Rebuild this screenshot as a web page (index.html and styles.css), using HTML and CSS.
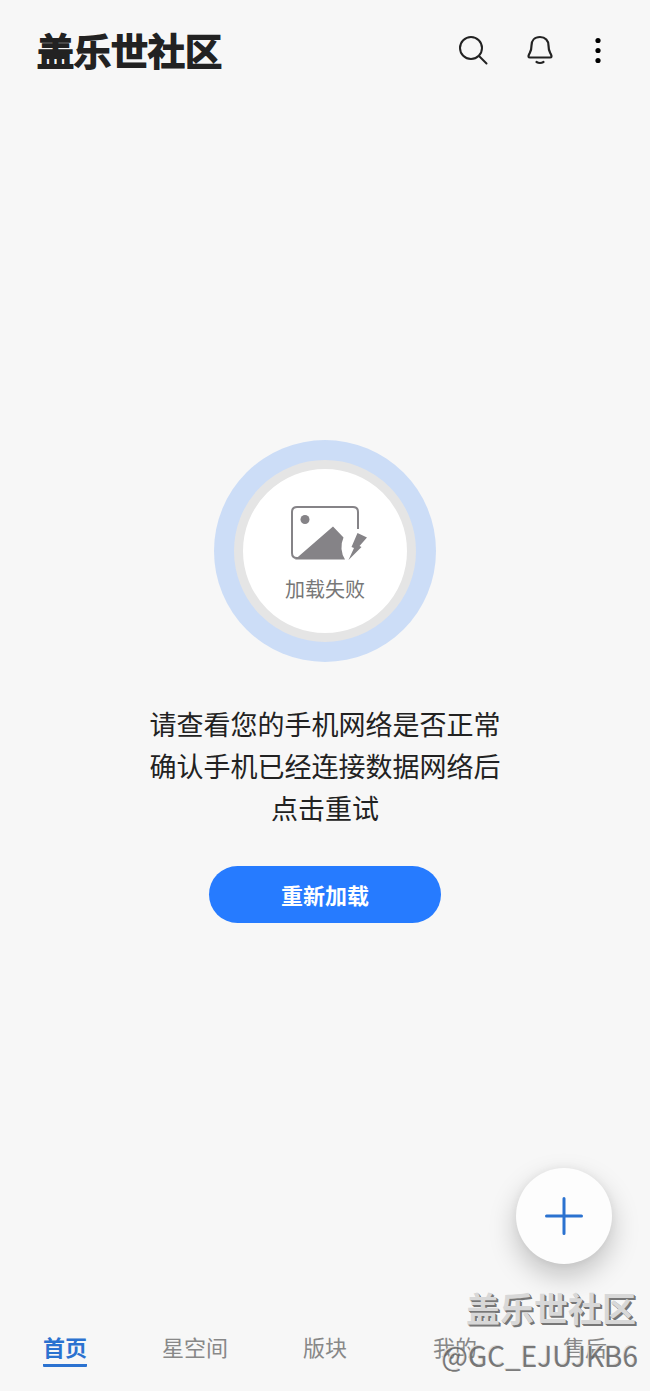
FILE: index.html
```html
<!DOCTYPE html>
<html lang="zh-CN">
<head>
    <meta charset="UTF-8">
    <meta name="viewport" content="width=device-width, initial-scale=1">
    <title>盖乐世社区</title>
    <link rel="stylesheet" href="styles.css">
</head>
<body>
    <header class="header">
        <h1 class="logo">盖乐世社区</h1>
        <div class="actions">
            <button class="icon-btn" aria-label="搜索">
                <svg width="32" height="32" viewBox="0 0 32 32" fill="none" stroke="#222" stroke-width="2" stroke-linecap="round">
                    <circle cx="14" cy="14" r="11"/>
                    <path d="M22 22l7.500 7.500"/>
                </svg>
            </button>
            <button class="icon-btn" aria-label="通知">
                <svg width="32" height="32" viewBox="0 0 32 32" fill="none" stroke="#222" stroke-width="2.200" stroke-linecap="round" stroke-linejoin="round">
                    <path d="M16 3C10.500 3 7.500 6.800 7.500 11.500C7.500 17 6.500 17.500 5 20.500C4 22.700 4.500 23.500 6 23.500H26C27.500 23.500 28 22.700 27 20.500C25.500 17.500 24.500 17 24.500 11.500C24.500 6.800 21.500 3 16 3Z"/>
                    <path d="M12.500 28Q16 30 19.500 28"/>
                </svg>
            </button>
            <button class="icon-btn" aria-label="更多">
                <svg width="8" height="32" viewBox="0 0 8 32" fill="#000">
                    <circle cx="4" cy="6.500" r="2.600"/>
                    <circle cx="4" cy="16.500" r="2.600"/>
                    <circle cx="4" cy="26.500" r="2.600"/>
                </svg>
            </button>
        </div>
    </header>

    <main class="content">
        <div class="error-ring">
            <div class="error-circle">
                <svg width="78" height="56" viewBox="0 0 78 56">
                    <path d="M68 24V7Q68 2 63 2H7Q2 2 2 7V48Q2 53 7 53H12" fill="none" stroke="#858387" stroke-width="2"/>
                    <circle cx="15" cy="14.500" r="4.500" fill="#858387"/>
                    <path d="M5 54.500L43 21.500L53.500 32.500Q51 38 51.500 44Q52 50 55 54.500Z" fill="#858387"/>
                    <path d="M67.500 28L77 32.500L69.500 41L71.500 42L58.500 55L64 43L61.500 42Z" fill="#858387"/>
                </svg>
                <span class="error-label">加载失败</span>
            </div>
        </div>
        <p class="message">请查看您的手机网络是否正常<br>确认手机已经连接数据网络后<br>点击重试</p>
        <button class="reload">重新加载</button>
    </main>

    <nav class="tabs">
        <a href="#" class="tab active"><span>首页</span></a>
        <a href="#" class="tab"><span>星空间</span></a>
        <a href="#" class="tab"><span>版块</span></a>
        <a href="#" class="tab"><span>我的</span></a>
        <a href="#" class="tab"><span>售后</span></a>
    </nav>

    <button class="fab" aria-label="发帖">
        <svg width="40" height="40" viewBox="0 0 40 40" fill="none" stroke="#2b72d0" stroke-width="3" stroke-linecap="round">
            <path d="M20 2.500V37.500M2.500 20H37.500"/>
        </svg>
    </button>

    <div class="watermark">
        <div class="watermark-name">盖乐世社区</div>
        <div class="watermark-user">@GC_EJUJKB6</div>
    </div>
</body>
</html>
```

FILE: styles.css
```css
* {
    box-sizing: border-box;
}
body {
    font-family: "Noto Sans CJK SC", sans-serif;
    background-color: #f7f7f7;
    color: #222;
    margin: 0;
    min-height: 100vh;
    display: flex;
    flex-direction: column;
    position: relative;
}
button {
    font-family: inherit;
    border: none;
    padding: 0;
    cursor: pointer;
}
.header {
    display: flex;
    justify-content: space-between;
    align-items: center;
    height: 100px;
    padding: 0 48px 0 37px;
}
.logo {
    margin: 0;
    font-size: 37px;
    line-height: 40px;
    font-weight: 500;
    -webkit-text-stroke: 2px #222;
    stroke-linejoin: round;
}
.actions {
    display: flex;
    align-items: center;
    gap: 35px;
}
.icon-btn {
    display: flex;
    background: none;
}
.icon-btn:last-child {
    margin-left: 3px;
}
.content {
    flex: 1;
    display: flex;
    flex-direction: column;
    align-items: center;
    justify-content: center;
    padding-bottom: 44px;
}
.error-ring {
    width: 222px;
    height: 222px;
    padding: 20px;
    border-radius: 50%;
    background-color: #ccddf7;
}
.error-circle {
    display: flex;
    flex-direction: column;
    align-items: center;
    height: 100%;
    padding-top: 36px;
    border: 9px solid #e5e5e5;
    border-radius: 50%;
    background-color: #fff;
}
.error-circle svg {
    margin-left: 8px;
}
.error-label {
    margin-top: 13px;
    font-size: 20px;
    line-height: 30px;
    color: #777;
}
.message {
    margin: 41px 0 37px;
    font-size: 27px;
    line-height: 42px;
    text-align: center;
}
.reload {
    width: 232px;
    height: 57px;
    padding-bottom: 2px;
    border-radius: 29px;
    background-color: #267bff;
    color: #fff;
    font-size: 22px;
    font-weight: 700;
}
.tabs {
    display: grid;
    grid-template-columns: repeat(5, 1fr);
    height: 84px;
    padding-top: 23px;
}
.tab {
    text-align: center;
    font-size: 22px;
    line-height: 33px;
    color: #888;
    text-decoration: none;
}
.tab span {
    display: inline-block;
}
.tab.active {
    color: #2b72d0;
    font-weight: 700;
}
.tab.active span {
    padding-bottom: 1px;
    border-bottom: 3px solid #2b72d0;
    border-radius: 1px;
}
.fab {
    position: absolute;
    right: 38px;
    bottom: 127px;
    width: 96px;
    height: 96px;
    display: flex;
    align-items: center;
    justify-content: center;
    border-radius: 50%;
    background-color: #fdfdfd;
    box-shadow: 0 12px 28px rgba(0, 0, 0, 0.22), 0 0 8px rgba(0, 0, 0, 0.05);
}
.watermark {
    position: absolute;
    right: 12px;
    bottom: 14px;
    text-align: right;
    pointer-events: none;
}
.watermark-name {
    padding: 0 2px 3px 0;
    font-size: 34px;
    line-height: 44px;
    font-weight: 700;
    color: #d8d8d8;
    text-shadow: 1px 1px 0 #777, 2px 2px 0 #777;
}
.watermark-user {
    font-size: 28px;
    line-height: 44px;
    color: rgba(90, 90, 90, 0.8);
    text-shadow: -1px -1px 0 #ddd;
}
```
